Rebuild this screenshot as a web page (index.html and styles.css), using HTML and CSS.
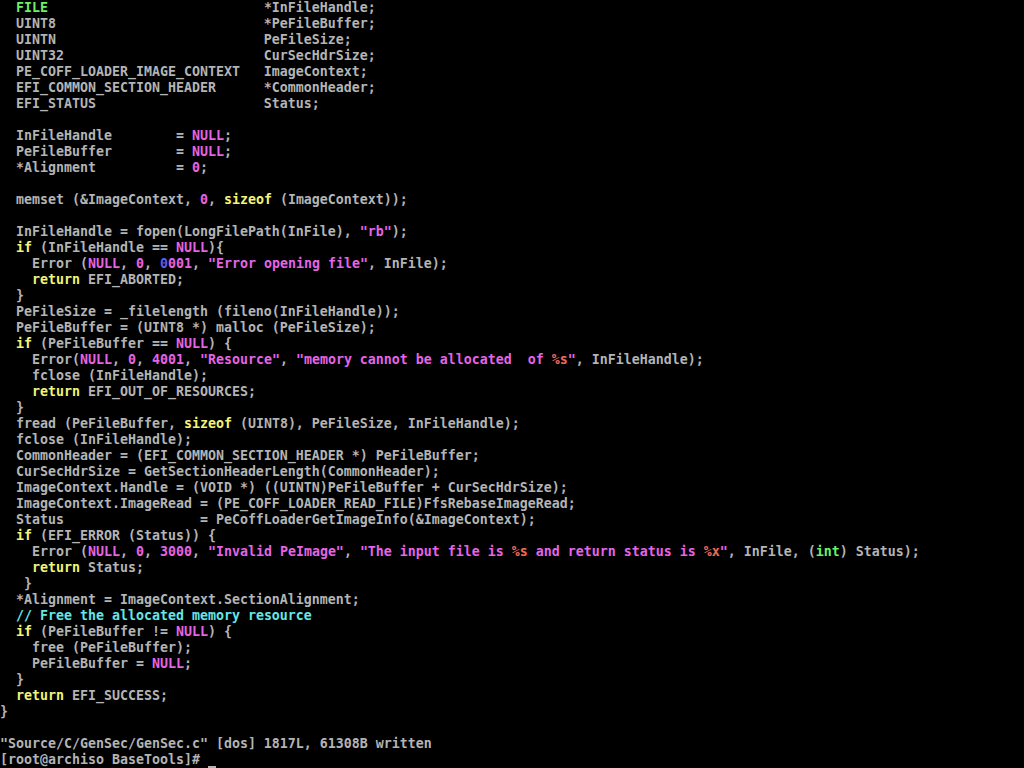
FILE: index.html
```html
<!DOCTYPE html>
<html lang="en">
<head>
  <meta charset="UTF-8">
  <title>tty1</title>
  <link rel="stylesheet" href="styles.css">
</head>
<body>
  <div class="layar">
    <div class="baris">  <span class="ty">FILE</span>                           *InFileHandle;</div>
    <div class="baris">  UINT8                          *PeFileBuffer;</div>
    <div class="baris">  UINTN                          PeFileSize;</div>
    <div class="baris">  UINT32                         CurSecHdrSize;</div>
    <div class="baris">  PE_COFF_LOADER_IMAGE_CONTEXT   ImageContext;</div>
    <div class="baris">  EFI_COMMON_SECTION_HEADER      *CommonHeader;</div>
    <div class="baris">  EFI_STATUS                     Status;</div>
    <div class="baris"></div>
    <div class="baris">  InFileHandle        = <span class="ko">NULL</span>;</div>
    <div class="baris">  PeFileBuffer        = <span class="ko">NULL</span>;</div>
    <div class="baris">  *Alignment          = <span class="ko">0</span>;</div>
    <div class="baris"></div>
    <div class="baris">  memset (&amp;ImageContext, <span class="ko">0</span>, <span class="kw">sizeof</span> (ImageContext));</div>
    <div class="baris"></div>
    <div class="baris">  InFileHandle = fopen(LongFilePath(InFile), <span class="ko">"rb"</span>);</div>
    <div class="baris">  <span class="kw">if</span> (InFileHandle == <span class="ko">NULL</span>){</div>
    <div class="baris">    Error (<span class="ko">NULL</span>, <span class="ko">0</span>, <span class="oz">0</span><span class="ko">001</span>, <span class="ko">"Error opening file"</span>, InFile);</div>
    <div class="baris">    <span class="kw">return</span> EFI_ABORTED;</div>
    <div class="baris">  }</div>
    <div class="baris">  PeFileSize = _filelength (fileno(InFileHandle));</div>
    <div class="baris">  PeFileBuffer = (UINT8 *) malloc (PeFileSize);</div>
    <div class="baris">  <span class="kw">if</span> (PeFileBuffer == <span class="ko">NULL</span>) {</div>
    <div class="baris">    Error(<span class="ko">NULL</span>, <span class="ko">0</span>, <span class="ko">4001</span>, <span class="ko">"Resource"</span>, <span class="ko">"memory cannot be allocated  of <span class="sp">%s</span>"</span>, InFileHandle);</div>
    <div class="baris">    fclose (InFileHandle);</div>
    <div class="baris">    <span class="kw">return</span> EFI_OUT_OF_RESOURCES;</div>
    <div class="baris">  }</div>
    <div class="baris">  fread (PeFileBuffer, <span class="kw">sizeof</span> (UINT8), PeFileSize, InFileHandle);</div>
    <div class="baris">  fclose (InFileHandle);</div>
    <div class="baris">  CommonHeader = (EFI_COMMON_SECTION_HEADER *) PeFileBuffer;</div>
    <div class="baris">  CurSecHdrSize = GetSectionHeaderLength(CommonHeader);</div>
    <div class="baris">  ImageContext.Handle = (VOID *) ((UINTN)PeFileBuffer + CurSecHdrSize);</div>
    <div class="baris">  ImageContext.ImageRead = (PE_COFF_LOADER_READ_FILE)FfsRebaseImageRead;</div>
    <div class="baris">  Status                 = PeCoffLoaderGetImageInfo(&amp;ImageContext);</div>
    <div class="baris">  <span class="kw">if</span> (EFI_ERROR (Status)) {</div>
    <div class="baris">    Error (<span class="ko">NULL</span>, <span class="ko">0</span>, <span class="ko">3000</span>, <span class="ko">"Invalid PeImage"</span>, <span class="ko">"The input file is <span class="sp">%s</span> and return status is <span class="sp">%x</span>"</span>, InFile, (<span class="ty">int</span>) Status);</div>
    <div class="baris">    <span class="kw">return</span> Status;</div>
    <div class="baris">   }</div>
    <div class="baris">  *Alignment = ImageContext.SectionAlignment;</div>
    <div class="baris">  <span class="cm">// Free the allocated memory resource</span></div>
    <div class="baris">  <span class="kw">if</span> (PeFileBuffer != <span class="ko">NULL</span>) {</div>
    <div class="baris">    free (PeFileBuffer);</div>
    <div class="baris">    PeFileBuffer = <span class="ko">NULL</span>;</div>
    <div class="baris">  }</div>
    <div class="baris">  <span class="kw">return</span> EFI_SUCCESS;</div>
    <div class="baris">}</div>
    <div class="baris"></div>
    <div class="baris">"Source/C/GenSec/GenSec.c" [dos] 1817L, 61308B written</div>
    <div class="baris">[root@archiso BaseTools]# <span class="kursor"> </span></div>
  </div>
</body>
</html>
```

FILE: styles.css
```css
body {
  margin: 0;
  background: #000;
  width: 1024px;
  height: 768px;
  overflow: hidden;
}
.layar {
  font-family: "DejaVu Sans Mono", "Liberation Mono", monospace;
  font-size: 13.29px;
  font-weight: bold;
  color: #b4b4b4;
}
.baris {
  height: 16px;
  line-height: 16px;
  white-space: pre;
}
.ty { color: #6cf06c; }
.kw { color: #f4f47a; }
.ko { color: #e664e6; }
.sp { color: #f06a5a; }
.oz { color: #5a5cf4; }
.cm { color: #66e6e6; }
.kursor {
  display: inline-block;
  width: 8px;
  height: 16px;
  box-shadow: inset 0 -2px 0 #b4b4b4;
  vertical-align: top;
}
```
